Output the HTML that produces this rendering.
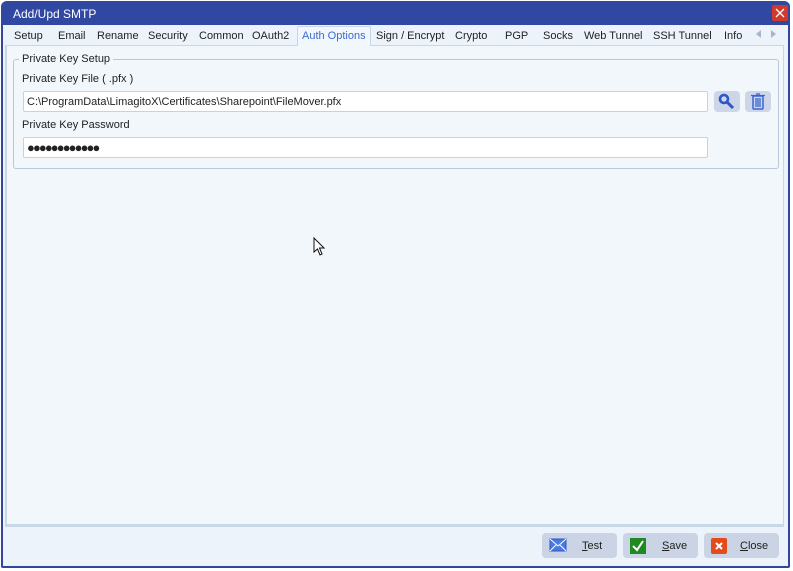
<!DOCTYPE html>
<html><head><meta charset="utf-8"><style>
*{margin:0;padding:0;box-sizing:border-box}
body{width:793px;height:571px;background:#fff;font-family:"Liberation Sans",Tahoma,sans-serif;font-size:11px;color:#222;position:relative;overflow:hidden}
.a{position:absolute}
.win{left:1px;top:1px;width:789px;height:567px;background:#edf3fb;border:2px solid #3047a0;border-top:none;border-radius:6px 6px 2px 2px}
.title{left:1px;top:1px;width:789px;height:24px;background:#3048a2;border-radius:6px 6px 0 0;color:#fff;font-size:12px;padding:6px 0 0 12px}
.xbtn{left:772px;top:5px;width:16px;height:16px;background:#d03a2c;border-radius:2px}
.tab{top:30px;font-size:11px;color:#222}
.tab.sel{top:26px;height:20px;background:#f2f7fc;border:1px solid #c8d6e6;border-bottom:none;color:#3a6ad0;padding:3px 4px 0 4px;border-radius:2px 2px 0 0}
.page{left:5px;top:45px;width:779px;height:480px;background:#f2f7fc;border:1px solid #c8d6e6;border-left:2px solid #c8d6e6}
.sep{left:5px;top:524px;width:779px;height:3px;background:#c8d8e8}
.group{left:13px;top:59px;width:766px;height:110px;border:1px solid #b8c8da;border-radius:3px}
.glabel{left:19px;top:53px;background:#f2f7fc;padding:0 3px;font-size:11px}
.inp{background:#fff;border:1px solid #c5d2e0;border-radius:2px;height:21px;padding:4px 0 0 3px;font-size:11px}
.ib{width:26px;height:21px;background:#ccd6e8;border-radius:4px}
.btn{top:533px;height:25px;width:75px;background:#cad4e5;border-radius:4px;font-size:11px}
.btn span{position:absolute;top:7px}
.btn svg{position:absolute;left:7px;top:5px}
</style></head><body>
<div class="a win"></div>
<div class="a title">Add/Upd SMTP</div>
<div class="a xbtn"><svg width="16" height="16"><path d="M4 4L12 12M12 4L4 12" stroke="#fff" stroke-width="1.3"/></svg></div>
<div class="a page"></div>
<span class="a tab" style="left:14px">Setup</span>
<span class="a tab" style="left:58px">Email</span>
<span class="a tab" style="left:97px">Rename</span>
<span class="a tab" style="left:148px">Security</span>
<span class="a tab" style="left:199px">Common</span>
<span class="a tab" style="left:252px">OAuth2</span>
<span class="a tab sel" style="left:297px;width:74px">Auth Options</span>
<span class="a tab" style="left:376px">Sign / Encrypt</span>
<span class="a tab" style="left:455px">Crypto</span>
<span class="a tab" style="left:505px">PGP</span>
<span class="a tab" style="left:543px">Socks</span>
<span class="a tab" style="left:584px">Web Tunnel</span>
<span class="a tab" style="left:653px">SSH Tunnel</span>
<span class="a tab" style="left:724px">Info</span>
<svg class="a" style="left:754px;top:29px" width="30" height="10"><path d="M7 1L2 5L7 9Z" fill="#a8b6c8"/><path d="M17 1L22 5L17 9Z" fill="#a8b6c8"/></svg>
<div class="a group"></div>
<div class="a glabel">Private Key Setup</div>
<div class="a" style="left:22px;top:73px">Private Key File ( .pfx )</div>
<div class="a inp" style="left:23px;top:91px;width:685px">C:\ProgramData\LimagitoX\Certificates\Sharepoint\FileMover.pfx</div>
<div class="a ib" style="left:714px;top:91px"><svg width="26" height="21"><circle cx="10" cy="8" r="4" fill="none" stroke="#2d56c8" stroke-width="2.6"/><path d="M13 11L19 17" stroke="#2d56c8" stroke-width="3"/></svg></div>
<div class="a ib" style="left:745px;top:91px"><svg width="26" height="21"><rect x="8" y="5" width="10" height="13" rx="1" fill="none" stroke="#3a64d0" stroke-width="1.5"/><path d="M6 4.5H20M11 3H15M11 7V16M13 7V16M15 7V16" stroke="#3a64d0" stroke-width="1.3"/></svg></div>
<div class="a" style="left:22px;top:119px">Private Key Password</div>
<div class="a inp" style="left:23px;top:137px;width:685px;font-size:13px;padding-top:2px;letter-spacing:-1.9px">●●●●●●●●●●●●</div>
<svg class="a" style="left:313px;top:237px" width="14" height="20"><path d="M1 1V15L4.5 12L7 18L9 17L6.5 11H11Z" fill="#fff" stroke="#111" stroke-width="1"/></svg>
<div class="a sep"></div>
<div class="a btn" style="left:542px"><svg width="18" height="14"><rect x="1" y="1" width="16" height="12" fill="#4a7be0" stroke="#2d56c8"/><path d="M1 1L9 8L17 1M1 13L7 7M17 13L11 7" stroke="#fff" stroke-width="1" fill="none"/></svg><span style="left:40px"><u>T</u>est</span></div>
<div class="a btn" style="left:623px"><svg width="16" height="16"><rect width="16" height="16" fill="#1f8a1f"/><path d="M3 8L7 12L13 3" stroke="#fff" stroke-width="2" fill="none"/></svg><span style="left:39px"><u>S</u>ave</span></div>
<div class="a btn" style="left:704px"><svg width="16" height="16"><rect width="16" height="16" rx="2" fill="#e34a1c"/><path d="M5 5L11 11M11 5L5 11" stroke="#fff" stroke-width="2"/></svg><span style="left:36px"><u>C</u>lose</span></div>
</body></html>
